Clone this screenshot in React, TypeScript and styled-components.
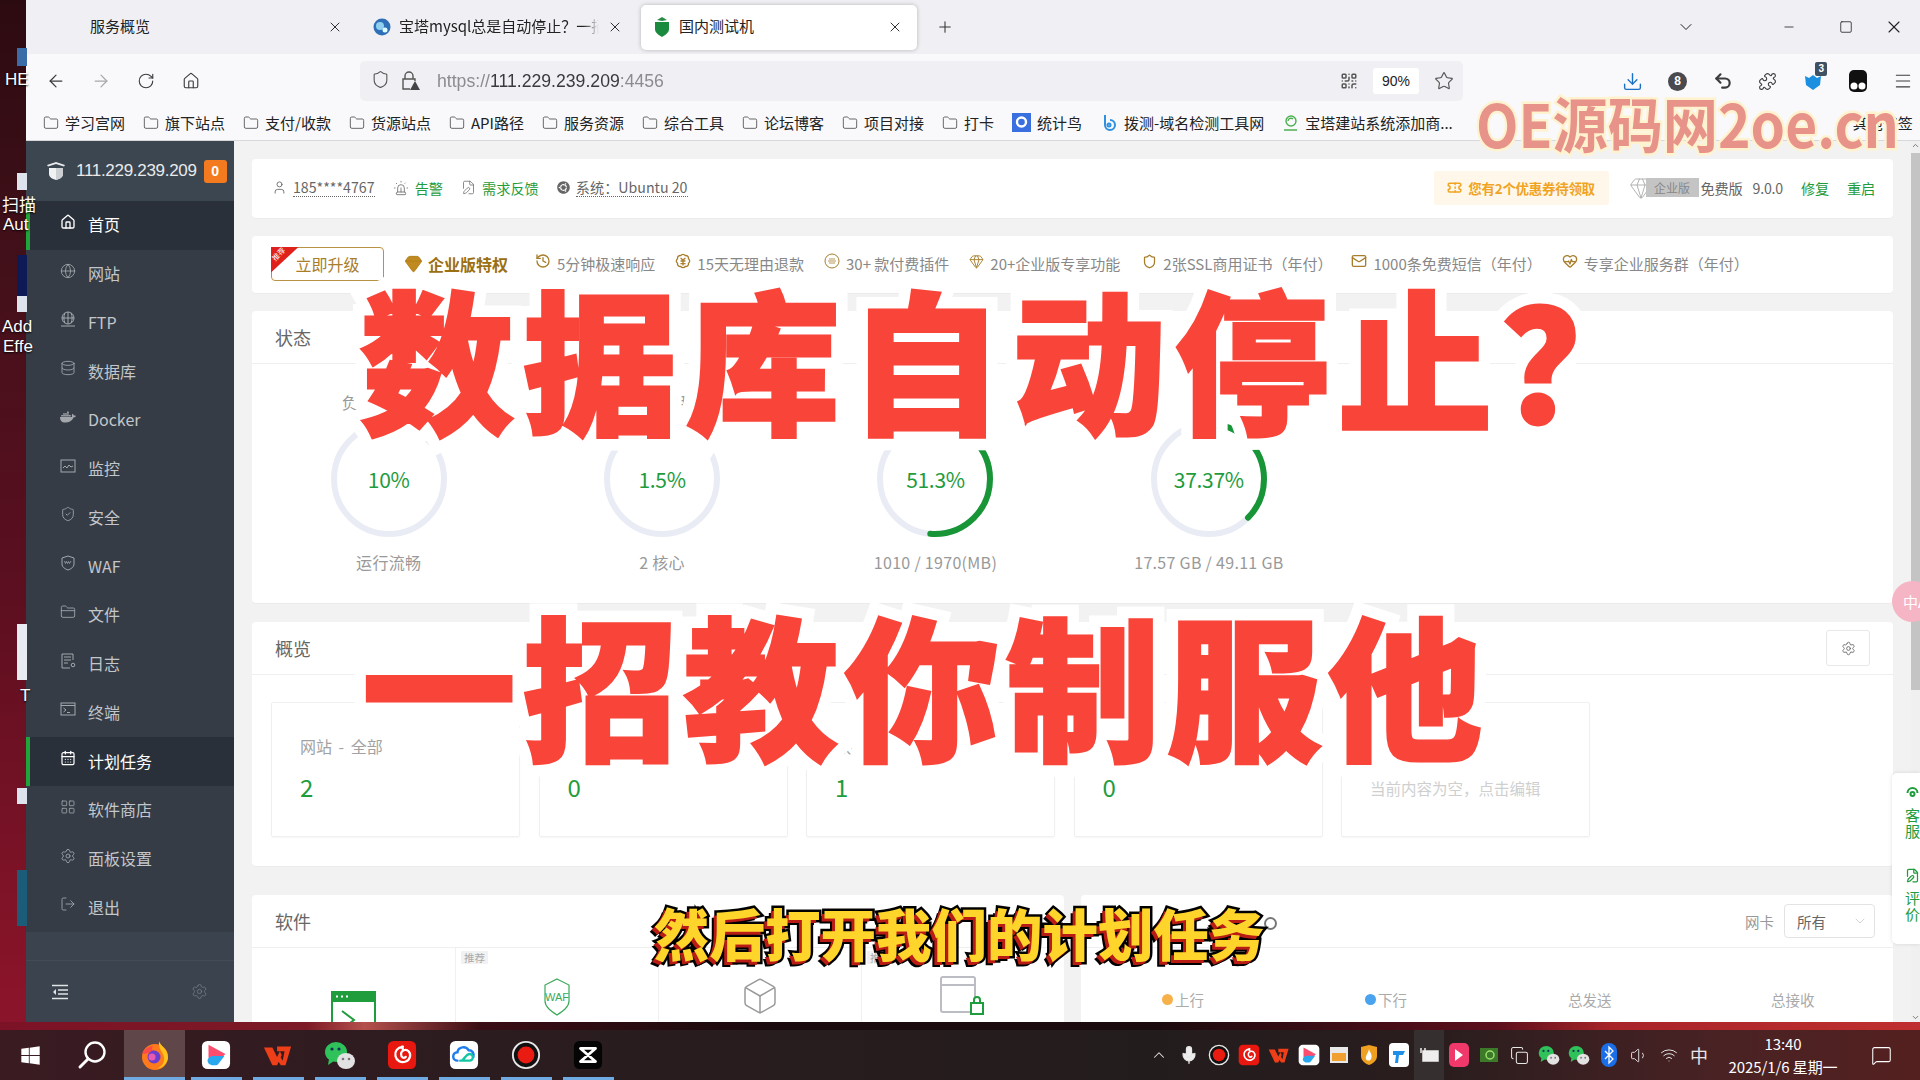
import React from "react";
import styled, { createGlobalStyle } from "styled-components";
import {
  ArrowLeft, ArrowRight, RotateCw, House, Shield, Star, Download, Undo2, Puzzle, Menu, X, Plus,
  ChevronDown, ChevronUp, Minus, Square, QrCode, Folder, User, Siren, FilePen, Globe, Database,
  ShieldCheck, FolderClosed, CalendarDays, LayoutGrid, Settings, LogOut, Gem,
  History, Mail, Mic, Volume1, Wifi, Copy, MessageSquare, Box, BadgeJapaneseYen, HeartPulse, Ticket,
} from "lucide-react";
import { FaDocker, FaUbuntu, FaWindows } from "react-icons/fa";

const CJK = `"Noto Sans CJK SC", "Liberation Sans", sans-serif`;
const GREEN = "#1f9c3c";
const GOLD = "#a87d2c";

const Global = createGlobalStyle`
  html, body { margin: 0; padding: 0; background: #3a0d14; }
  body { font-family: ${CJK}; overflow: hidden; }
  * { box-sizing: border-box; }
`;

const Screen = styled.div`
  position: relative; width: 1920px; height: 1080px; overflow: hidden;
  display: flex; flex-direction: column;
  background: linear-gradient(180deg, #2c0b10 0%, #43101a 25%, #5c0f20 55%, #8a1429 92%);
`;
const Desk = styled.div`display: flex; height: 1022px; padding-left: 26px;`;
const Wallstrip = styled.div`
  height: 8px;
  background: linear-gradient(90deg, #7c1226 0%, #7c1a26 16%, #b5504c 19%, #3a0d14 25%, #1a0b0e 40%, #1a0b0e 60%, #5c0f1c 78%, #a82428 84%, #c02f2f 100%);
`;
const Win = styled.div`
  flex: 1; min-width: 0; display: flex; flex-direction: column; background: #f9f9fb; overflow: hidden;
`;

/* desktop slivers */
const DeskLabel = styled.span<{ $x: number; $y: number }>`
  position: absolute; left: ${p => p.$x}px; top: ${p => p.$y}px; color: #fff; font-size: 17px; line-height: 20px;
  white-space: nowrap; font-family: "Liberation Sans", ${CJK}; text-shadow: 0 1px 2px #000;
`;
const DeskTile = styled.span<{ $y: number; $h: number; $c: string }>`
  position: absolute; left: 17px; top: ${p => p.$y}px; width: 10px; height: ${p => p.$h}px; background: ${p => p.$c};
`;

/* tabs */
const TabStrip = styled.div`
  height: 54px; background: #f0f0f4; display: flex; align-items: center; padding-left: 55px; flex-shrink: 0;
`;
const Tab = styled.div<{ $active?: boolean; $pad: number }>`
  width: 276px; height: 45px; margin-right: 4px; padding: 0 14px 0 ${p => p.$pad}px; display: flex; align-items: center; gap: 8px;
  font-size: 15px; color: #222; border-radius: 5px; flex-shrink: 0;
  background: ${p => (p.$active ? "#fff" : "transparent")};
  box-shadow: ${p => (p.$active ? "0 0 4px rgba(0,0,0,.25)" : "none")};
`;
const TabTitle = styled.span<{ $fade?: boolean }>`
  flex: 1; min-width: 0; white-space: nowrap; overflow: hidden; line-height: 20px; margin-top: -2px;
  ${p => (p.$fade ? "mask-image: linear-gradient(90deg, #000 92%, transparent);" : "")}
`;
const NewTab = styled.span`display: flex; margin-left: 15px; color: #333;`;
const WinControls = styled.div`
  margin-left: auto; display: flex; align-items: center; color: #222; padding-right: 6px;
`;
const WinBtn = styled.span<{ $w: number }>`display: flex; justify-content: center; width: ${p => p.$w}px;`;

/* toolbar */
const Toolbar = styled.div`
  height: 54px; display: flex; align-items: center; padding-left: 7px; flex-shrink: 0; background: #f9f9fb;
`;
const ToolBtn = styled.span<{ $dim?: boolean; $color?: string }>`
  position: relative; width: 45px; flex-shrink: 0; display: flex; justify-content: center; align-items: center;
  color: ${p => p.$color ?? (p.$dim ? "#a8a8ac" : "#3c3c40")};
`;
const UrlBar = styled.div`
  margin: 0 147px 0 147px; width: 1103px; height: 40px; flex-shrink: 0; border-radius: 5px; background: #f0f0f4;
  display: flex; align-items: center; padding-left: 11px; color: #555;
`;
const UrlIcons = styled.span`display: flex; gap: 11px; width: 66px;`;
const UrlText = styled.span`
  font: 18px "Liberation Sans", sans-serif; color: #8c8c90; transform: scaleX(.98); transform-origin: left;
  b { font-weight: 400; color: #3a3a3e; }
`;
const UrlEnd = styled.span`margin-left: auto; display: flex; align-items: center; color: #555; padding-right: 9px;`;
const Zoom = styled.span`
  width: 46px; height: 26px; margin: 0 15px 0 15px; background: #fff; border-radius: 3px; color: #222;
  font: 14px/26px "Liberation Sans", sans-serif; text-align: center;
`;
const Badge = styled.span`
  position: absolute; top: -9px; right: 8px; background: #3f5060; color: #fff; font: 700 10px/14px "Liberation Sans", sans-serif;
  padding: 0 3px; border-radius: 2px;
`;
const Eight = styled.span`
  width: 19px; height: 19px; border-radius: 50%; background: #4a4a4e; color: #fff; text-align: center;
  font: 700 12px/19px "Liberation Sans", sans-serif;
`;

/* bookmarks */
const Bookmarks = styled.div`
  height: 33px; display: flex; align-items: center; padding: 0 0 3px 17px; gap: 18px; flex-shrink: 0; overflow: hidden;
  background: #f9f9fb; border-bottom: 1px solid #d8d8da; white-space: nowrap;
`;
const Bookmark = styled.span`
  display: flex; align-items: center; gap: 6px; font-size: 15px; color: #222; flex-shrink: 0;
`;
const BookmarkEnd = styled(Bookmark)`margin-left: 382px;`;

/* panel */
const Panel = styled.div`flex: 1; min-height: 0; display: flex;`;
const Side = styled.nav`width: 208px; flex-shrink: 0; display: flex; flex-direction: column; background: #3b444e;`;
const SideHead = styled.div`
  height: 60px; display: flex; align-items: center; padding-left: 20px; background: #3c4650; color: #e8eaec;
`;
const HeadIp = styled.span`margin-left: 10px; font: 17px "Liberation Sans", sans-serif; letter-spacing: -.3px;`;
const HeadBadge = styled.span`
  margin-left: 7px; width: 23px; height: 23px; border-radius: 3px; background: #f47a1f; color: #fff; text-align: center;
  font: 700 14px/23px "Liberation Sans", sans-serif;
`;
const SideItem = styled.div<{ $on?: boolean }>`
  height: 48.75px; display: flex; align-items: center; gap: 12px; padding: 0 0 2px 30px;
  border-left: 4px solid ${p => (p.$on ? "#20a53a" : "transparent")};
  background: ${p => (p.$on ? "#2a3039" : "#353c45")};
  color: ${p => (p.$on ? "#fff" : "#c3c6ca")}; font-size: 16px;
  svg { width: 16px; height: 16px; margin-top: -5px; flex-shrink: 0; color: ${p => (p.$on ? "#fff" : "#a4a8ad")}; }
`;
const SideFill = styled.div`height: 29px; border-bottom: 1px solid #434c56;`;
const SideFoot = styled.div`
  flex: 1; display: flex; align-items: center; justify-content: space-between; padding: 0 26px; color: #cfd2d5;
`;
const Main = styled.main`
  position: relative; flex: 1; min-width: 0; background: #f2f2f2; padding: 18px 27px 0 18px; display: flex; flex-direction: column;
  overflow: hidden;
`;
const Scroll = styled.span`
  position: absolute; top: 0; right: 0; bottom: 0; width: 9px; background: #f0f0f0; color: #555;
  display: flex; flex-direction: column; justify-content: space-between; align-items: center;
`;
const Thumb = styled.span`position: absolute; top: 12px; left: 0; right: 0; height: 537px; background: #c4c4c4;`;
const Card = styled.section<{ $h?: number; $mb?: number }>`
  background: #fff; border-radius: 4px; flex-shrink: 0; height: ${p => p.$h}px; margin-bottom: ${p => p.$mb ?? 18}px;
  box-shadow: 0 1px 1px rgba(0,0,0,.03);
`;
const TopBar = styled(Card)`display: flex; align-items: center; padding: 0 18px 2px 20px; font-size: 14.2px;`;
const Meta = styled.span<{ $g?: boolean; $ml?: number }>`
  display: flex; align-items: center; gap: 6px; margin-left: ${p => p.$ml ?? 0}px;
  color: ${p => (p.$g ? GREEN : "#666")};
  svg { color: #666; flex-shrink: 0; }
`;
const Dotted = styled.span`border-bottom: 1px dotted currentColor; line-height: 18px;`;
const Coupon = styled.span`
  margin-left: auto; width: 175px; height: 34px; background: #fff8ea; border-radius: 3px; color: #f0a41f; font-weight: 700;
  font-size: 13.5px; letter-spacing: -.3px; display: flex; align-items: center; justify-content: center; gap: 6px;
`;
const EntTag = styled.span`
  display: flex; align-items: center; margin-left: 20px; color: #aaa;
`;
const EntChip = styled.span`
  background: #c4c4c4; color: #888; font-size: 12px; line-height: 19px; width: 53px; height: 19px; text-align: center; margin-left: -7px;
`;
const Plain = styled.span<{ $ml: number; $g?: boolean }>`
  margin-left: ${p => p.$ml}px; color: ${p => (p.$g ? GREEN : "#666")}; letter-spacing: -.2px;
`;
const FeatureBar = styled(Card)`display: flex; align-items: center; padding: 0 0 2px 19px; white-space: nowrap; overflow: hidden;`;
const Upgrade = styled.span`
  position: relative; width: 113px; height: 34px; border: 1px solid #b99344; border-radius: 4px; color: ${GOLD}; font-size: 16px;
  display: flex; align-items: center; justify-content: center; flex-shrink: 0;
`;
const Ribbon = styled.span`
  position: absolute; left: -1px; top: -1px; width: 28px; height: 26px; background: #e0201a; color: #fff; font-size: 7.5px;
  clip-path: polygon(0 0, 100% 0, 0 100%);
`;
const RibbonText = styled.span`
  position: absolute; left: 0; top: 2px; line-height: 10px; transform: rotate(-45deg);
`;
const Ent = styled.span`
  margin-left: 20px; display: flex; align-items: center; gap: 5px; font-weight: 700; font-size: 16px; color: #9a7012;
  svg { color: #b07f1a; }
`;
const Feature = styled.span<{ $ml: number }>`
  margin-left: ${p => p.$ml}px; display: flex; align-items: center; gap: 6px; color: #888; font-size: 15px;
  svg { color: ${GOLD}; flex-shrink: 0; margin-top: -5px; }
`;
const CardHead = styled.header<{ $h: number }>`
  height: ${p => p.$h}px; display: flex; align-items: center; padding: 0 23px; border-bottom: 1px solid #efefef; color: #666; font-size: 18px;
`;
const GaugeRow = styled.div`display: grid; grid-template-columns: repeat(4, 273.4px); padding-top: 28px;`;
const GaugeCell = styled.div`display: flex; flex-direction: column; align-items: center; color: #999; font-size: 16px;`;
const GaugeTitle = styled.span<{ $pr: number }>`font-size: 16px; line-height: 20px; height: 20px; padding-right: ${p => p.$pr}px;`;
const GaugeWrap = styled.div`position: relative; width: 116px; height: 116px; margin-top: 9px;`;
const GaugeValue = styled.span`
  position: absolute; inset: 0; display: flex; align-items: center; justify-content: center; color: ${GREEN}; font-size: 21px;
  letter-spacing: -.3px;
`;
const GaugeNote = styled.span`margin-top: 15px; line-height: 20px; letter-spacing: .3px;`;
const GearBtn = styled.span`
  margin-left: auto; width: 44px; height: 36px; border: 1px solid #e8e8e8; border-radius: 3px; color: #666;
  display: flex; align-items: center; justify-content: center;
`;
const OverGrid = styled.div`display: grid; grid-template-columns: repeat(5, 249px); gap: 18.5px; padding: 27px 0 0 19px;`;
const OverBox = styled.div`
  height: 135px; border: 1px solid #f0f0f0; padding: 31px 0 0 28px; box-shadow: 0 1px 2px rgba(0,0,0,.04); border-radius: 2px;
`;
const OverLabel = styled.div`font-size: 16px; line-height: 24px; color: #a2a2a2; word-spacing: 3px;`;
const OverValue = styled.div`font-size: 24px; line-height: 32px; margin-top: 13px; color: ${GREEN};`;
const OverEmpty = styled.div`font-size: 15.5px; color: #cfcfcf; margin-top: 43px; white-space: nowrap;`;
const Bottom = styled.div`display: grid; grid-template-columns: 812px 812px; gap: 17px;`;
const BottomCard = styled(Card)`height: 130px; margin: 0; overflow: hidden;`;
const SoftGrid = styled.div`display: grid; grid-template-columns: repeat(4, 1fr); height: 80px;`;
const SoftCell = styled.div<{ $pt: number }>`
  position: relative; display: flex; justify-content: center; padding-top: ${p => p.$pt}px;
  & + & { border-left: 1px solid #f0f0f0; }
`;
const RecTag = styled.span`
  position: absolute; left: 5px; top: 3px; background: #f2f2f2; color: #aaa; font-size: 10.5px; line-height: 13px; padding: 0 3px;
`;
const NicLabel = styled.span`margin-left: auto; color: #999; font-size: 14.5px;`;
const Select = styled.span`
  margin: 0 -5px 0 10px; width: 91px; height: 34px; border: 1px solid #e3e3e3; border-radius: 4px; display: flex; align-items: center;
  justify-content: space-between; padding: 0 6px 0 12px; font-size: 14.5px; color: #666;
  svg { color: #bbb; }
`;
const NetRow = styled.div`
  display: grid; grid-template-columns: repeat(4, 203px); font-size: 14.5px; color: #aaa; padding: 41px 0 0 81px;
  height: 80px;
`;
const NetCell = styled.span<{ $dot?: string }>`
  display: flex; align-items: center; height: 20px; gap: 2px;
  &::before { content: ""; display: ${p => (p.$dot ? "block" : "none")}; width: 11px; height: 11px; border-radius: 50%; background: ${p => p.$dot}; }
`;
const Spin = styled.span`
  position: absolute; left: 1264px; top: 917px; width: 13px; height: 13px; border: 2px solid #777; border-radius: 50%;
`;

/* right float */
const Float = styled.aside`
  position: absolute; right: 0; top: 632px; width: 28px; height: 171px; background: #fff; border-radius: 5px 0 0 5px;
  box-shadow: 0 0 4px rgba(0,0,0,.12); color: ${GREEN}; display: flex; flex-direction: column; padding-left: 13px;
  font-size: 15px; line-height: 16px; overflow: hidden;
`;
const FloatBlock = styled.span<{ $mt: number }>`
  display: flex; flex-direction: column; margin-top: ${p => p.$mt}px; width: 16px;
  svg { margin-bottom: 7px; flex-shrink: 0; }
`;
const Pink = styled.span`
  position: absolute; right: -13px; top: 440px; width: 41px; height: 41px; border-radius: 50%; background: #f6b5c5; color: #fff;
  font-size: 15px; line-height: 41px; padding-left: 11px; white-space: nowrap; overflow: hidden;
`;

/* overlay text */
const Big = styled.div<{ $x: number; $y: number; $ls: number }>`
  position: absolute; left: ${p => p.$x}px; top: ${p => p.$y}px; white-space: nowrap; z-index: 5;
  font-size: 154px; font-weight: 900; line-height: 154px; color: #f94539; font-family: "Noto Sans CJK SC", sans-serif;
  letter-spacing: ${p => p.$ls}px;
  -webkit-text-stroke: 26px #fff; paint-order: stroke fill;
  &::after {
    content: attr(data-t); position: absolute; left: 0; top: 0; -webkit-text-stroke: 3px #f94539;
  }
`;
const Subtitle = styled.div`
  position: absolute; left: 654px; top: 896px; z-index: 6; white-space: nowrap; font-size: 55.5px; font-weight: 900; line-height: 72px;
  color: #ffd42b; font-family: "Noto Sans CJK SC", sans-serif;
  -webkit-text-stroke: 5px #000; paint-order: stroke fill; text-shadow: -3px 3px 0 #b91c14, -5px 5px 0 #000;
`;
const Mark = styled.div`
  position: absolute; left: 1476px; top: 79px; z-index: 6; white-space: nowrap; font-size: 60px; font-weight: 700; line-height: 86px;
  color: #e8938a; font-family: "Noto Sans CJK SC", sans-serif; transform: scaleX(.92); transform-origin: left;
  -webkit-text-stroke: 5px #fff3cf; paint-order: stroke fill;
`;

/* taskbar */
const Taskbar = styled.footer`
  flex: 1; position: relative; display: flex; align-items: center;
  background: linear-gradient(90deg, #3a1b22 0%, #2b1c1f 25%, #231c1d 60%, #2a1d1e 75%, #4a2224 90%, #54201f 100%);
`;
const TaskSlot = styled.span<{ $w: number; $on?: boolean; $line?: boolean }>`
  position: relative; width: ${p => p.$w}px; height: 50px; flex-shrink: 0; display: flex; align-items: center; justify-content: center; color: #fff;
  background: ${p => (p.$on ? "#5f4649" : "transparent")};
  &::after {
    content: ""; display: ${p => (p.$line ? "block" : "none")}; position: absolute; left: ${p => (p.$on ? 0 : 6)}px; right: ${p => (p.$on ? 0 : 5)}px;
    bottom: 0; height: 3px; background: #6fabe2;
  }
`;
const Tray = styled.div`margin-left: auto; display: flex; align-items: center; height: 50px; padding-right: 6px; color: #fff;`;
const TrayItem = styled.span<{ $hi?: boolean }>`
  width: 30px; height: 50px; display: flex; align-items: center; justify-content: center; color: #e8e8e8;
  background: ${p => (p.$hi ? "#35302f" : "transparent")}; font-size: 18px;
`;
const Clock = styled.span`
  width: 130px; margin-left: 4px; display: flex; flex-direction: column; align-items: center; color: #fff;
  font-size: 15px; line-height: 23px; letter-spacing: -.1px;
`;
const Notice = styled.span`width: 66px; display: flex; justify-content: center; margin-left: 0;`;

/* drawn logos */
const Logo = ({ s = 30, children }: { s?: number; children: React.ReactNode }) => (
  <svg width={s} height={s} viewBox="0 0 32 32">{children}</svg>
);
const IcoFirefox = ({ s }: { s?: number }) => (
  <Logo s={s}>
    <circle cx="16" cy="18" r="13" fill="#ff7a1a" />
    <path d="M20 2c1 5 9 7 9 17a13 13 0 0 1-13 11c6-1 10-6 9-12-1-5-6-8-5-16z" fill="#ffc21c" />
    <path d="M3 15c3-6 8-8 11-8-2 3-1 4 2 5-5 1-8 3-13 3z" fill="#ff4a4a" />
    <circle cx="15" cy="18" r="6.5" fill="#6a3fd0" />
    <circle cx="13" cy="18" r="3.5" fill="#e85ab0" />
  </Logo>
);
const IcoPlayer = ({ s }: { s?: number }) => (
  <Logo s={s}>
    <rect x="1" y="1" width="30" height="30" rx="6" fill="#fff" />
    <path d="M8 5l18 10-4 4H8z" fill="#ff4d6d" />
    <path d="M7 22c0-3 3-5 6-5h12l-7 9c-3 2-11 1-11-4z" fill="#2aa8ee" />
  </Logo>
);
const IcoWps = ({ s }: { s?: number }) => (
  <Logo s={s}>
    <path d="M1 8h9l5 10 3-6 2 4-5 11h-5zM15 7h15l-6 20h-5l-3-5 2-5 3 5 2-10h-8z" fill="#ee3f18" />
  </Logo>
);
const IcoWechat = ({ s }: { s?: number }) => (
  <Logo s={s}>
    <ellipse cx="12" cy="13" rx="11" ry="10" fill="#2fc25b" />
    <path d="M5 20l-1 6 6-4z" fill="#2fc25b" />
    <circle cx="8" cy="10" r="1.6" fill="#135" /><circle cx="15" cy="10" r="1.6" fill="#135" />
    <ellipse cx="22" cy="22" rx="9" ry="8" fill="#e2e2e2" />
    <circle cx="19" cy="20" r="1.3" fill="#777" /><circle cx="25" cy="20" r="1.3" fill="#777" />
  </Logo>
);
const IcoNetease = ({ s }: { s?: number }) => (
  <Logo s={s}>
    <rect x="1" y="1" width="30" height="30" rx="6" fill="#e8170f" />
    <path d="M17 7c-6 1-9 5-8 10s6 8 11 6 6-8 3-11-8-1-8 3 3 5 5 3M16 7l1 3" fill="none" stroke="#fff" strokeWidth="2.4" strokeLinecap="round" />
  </Logo>
);
const IcoCloud = ({ s }: { s?: number }) => (
  <Logo s={s}>
    <rect x="1" y="1" width="30" height="30" rx="6" fill="#fff" />
    <path d="M9 22a4.5 4.5 0 0 1 0-9c1-6 9-7 12-2 4 0 6 3 5 7" fill="none" stroke="#1f7cf0" strokeWidth="2.6" strokeLinecap="round" />
    <path d="M12 22h10a3.5 3.5 0 0 0 0-7c-3 0-5 4-7 6" fill="none" stroke="#14c5a5" strokeWidth="2.6" strokeLinecap="round" />
  </Logo>
);
const IcoRecord = ({ s }: { s?: number }) => (
  <Logo s={s}>
    <circle cx="16" cy="16" r="14" fill="#111" stroke="#e8e8e8" strokeWidth="2" />
    <circle cx="16" cy="16" r="9" fill="#ea1c12" />
  </Logo>
);
const IcoCapcut = ({ s }: { s?: number }) => (
  <Logo s={s}>
    <rect x="1" y="1" width="30" height="30" rx="6" fill="#050505" />
    <path d="M8 9h16L8 23h16zM8 9l16 14" stroke="#fff" strokeWidth="3" fill="none" strokeLinejoin="round" />
  </Logo>
);
const IcoSearch = () => (
  <svg width="30" height="30" viewBox="0 0 30 30" fill="none" stroke="#fff" strokeWidth="2.4" strokeLinecap="round">
    <circle cx="18" cy="12" r="9.5" /><path d="M11 19l-8 8" strokeWidth="3" />
  </svg>
);
const IcoLockWarn = () => (
  <svg width="20" height="22" viewBox="0 0 20 22" fill="none" stroke="#555" strokeWidth="1.4">
    <path d="M4 9V6a4 4 0 0 1 8 0v3" /><path d="M9 19H2V9h12v2" />
    <path d="M14 11l5 9H9z" fill="#444" stroke="none" />
  </svg>
);
const IcoBaota = ({ s = 20 }: { s?: number }) => (
  <svg width={s} height={s} viewBox="0 0 20 20">
    <path d="M1 4l9-3 9 3-1 1.4-8-2.4-8 2.4z" fill="#e8eaec" />
    <path d="M3 7h14v6c0 3-3 5-7 6-4-1-7-3-7-6z" fill="#f0f1f2" />
    <path d="M10 7h7v6c0 3-3 5-7 6z" fill="#cdd0d3" />
  </svg>
);
const IcoGreenShield = () => (
  <svg width="18" height="20" viewBox="0 0 18 20">
    <path d="M9 0l5 3-5 1-5-1z" fill="#2a8a4a" />
    <path d="M2 5h14v7c0 4-4 6-7 8-3-2-7-4-7-8z" fill="#1a8a3f" />
  </svg>
);
const IcoBlueBird = () => (
  <svg width="18" height="18" viewBox="0 0 18 18">
    <circle cx="9" cy="9" r="8.5" fill="#2f6fb8" />
    <circle cx="7" cy="8" r="4" fill="#8fd0f0" />
    <circle cx="12" cy="12" r="2.5" fill="#dff" />
  </svg>
);
const IcoWebFrame = ({ c = "#a4a8ad" }: { c?: string }) => (
  <svg viewBox="0 0 16 16" fill="none" stroke={c} strokeWidth="1">
    <rect x="1" y="2" width="14" height="12" />
    <path d="M3 10l2-2 2 2 2-3 2 2 2-1" />
  </svg>
);
const IcoLogs = () => (
  <svg viewBox="0 0 16 16" fill="none" stroke="#a4a8ad" strokeWidth="1">
    <path d="M13 7V1H2v14h8M4 4h7M4 7h7M4 10h4" /><circle cx="13" cy="12" r="1.8" />
  </svg>
);
const IcoFtp = () => (
  <svg viewBox="0 0 16 16" fill="none" stroke="#a4a8ad" strokeWidth="1">
    <circle cx="8" cy="7" r="6" /><path d="M2 7h12M8 1v12M5 2c-1.5 3-1.5 7 0 10M11 2c1.5 3 1.5 7 0 10M1 15h14" />
  </svg>
);
const IcoWaf = () => (
  <svg viewBox="0 0 16 16" fill="none" stroke="#a4a8ad" strokeWidth="1">
    <path d="M8 1l6 2v6c0 3-3 5-6 6-3-1-6-3-6-6V3z" /><path d="M4.5 6l1 2.5 1-2 1 2 1-2 1 2 1.5-2.5" strokeWidth=".8" />
  </svg>
);
const IcoTerm = () => (
  <svg viewBox="0 0 16 16" fill="none" stroke="#a4a8ad" strokeWidth="1">
    <rect x="1" y="2" width="14" height="12" /><path d="M1 4.5h14M3.5 7l2.5 2-2.5 2M7 11.5h3" />
  </svg>
);
const IcoOutdent = () => (
  <svg width="16" height="16" viewBox="0 0 16 16" fill="none" stroke="#e0e2e4" strokeWidth="1.4">
    <path d="M0 1.5h16M6 6h10M6 10h10M0 14.5h16" /><path d="M4 5L1 8l3 3z" fill="#e0e2e4" stroke="none" />
  </svg>
);
const IcoFolder = () => <Folder size={16} strokeWidth={1.2} color="#444" />;

const Gauge = ({ pct }: { pct: number }) => {
  const r = 55;
  const c = 2 * Math.PI * r;
  return (
    <svg width="116" height="116" viewBox="0 0 116 116">
      <circle cx="58" cy="58" r={r} fill="none" stroke="#e9ecf4" strokeWidth="6" />
      <circle cx="58" cy="58" r={r} fill="none" stroke="#179537" strokeWidth="6" strokeLinecap="round"
        strokeDasharray={`${(c * pct) / 100} ${c}`} transform="rotate(-90 58 58)" />
    </svg>
  );
};

const sideItems: [React.ReactNode, string, boolean?][] = [
  [<House />, "首页", true],
  [<Globe strokeWidth={1.3} />, "网站"],
  [<IcoFtp />, "FTP"],
  [<Database strokeWidth={1.3} />, "数据库"],
  [<FaDocker />, "Docker"],
  [<IcoWebFrame />, "监控"],
  [<ShieldCheck strokeWidth={1.3} />, "安全"],
  [<IcoWaf />, "WAF"],
  [<FolderClosed strokeWidth={1.3} />, "文件"],
  [<IcoLogs />, "日志"],
  [<IcoTerm />, "终端"],
  [<CalendarDays strokeWidth={1.8} />, "计划任务", true],
  [<LayoutGrid strokeWidth={1.2} />, "软件商店"],
  [<Settings strokeWidth={1.3} />, "面板设置"],
  [<LogOut strokeWidth={1.3} />, "退出"],
];
const bookmarks: [React.ReactNode, string][] = [
  [<IcoFolder />, "学习宫网"], [<IcoFolder />, "旗下站点"], [<IcoFolder />, "支付/收款"], [<IcoFolder />, "货源站点"],
  [<IcoFolder />, "API路径"], [<IcoFolder />, "服务资源"], [<IcoFolder />, "综合工具"], [<IcoFolder />, "论坛博客"],
  [<IcoFolder />, "项目对接"], [<IcoFolder />, "打卡"],
  [<svg width="19" height="19" viewBox="0 0 19 19"><rect width="19" height="19" fill="#3a6fe0" /><circle cx="9.5" cy="9" r="4.5" fill="none" stroke="#fff" strokeWidth="2.4" /></svg>, "统计鸟"],
  [<svg width="18" height="20" viewBox="0 0 18 20" fill="none" stroke="#2f8fe0" strokeWidth="2"><path d="M5 2v10a5 5 0 1 0 5-5" /><circle cx="9" cy="12" r="1.5" /></svg>, "拨测-域名检测工具网"],
  [<svg width="17" height="18" viewBox="0 0 17 18" fill="none" stroke="#4caf50" strokeWidth="1.4"><circle cx="9" cy="7" r="5" /><path d="M2 16h13M6 7a3 3 0 0 1 5-2" /></svg>, "宝塔建站系统添加商..."],
];
const features: [React.ReactNode, string, number][] = [
  [<History size={16} />, "5分钟极速响应", 27],
  [<BadgeJapaneseYen size={16} />, "15天无理由退款", 20],
  [<svg width="16" height="16" viewBox="0 0 16 16" fill="none" stroke={GOLD}><circle cx="8" cy="8" r="7" /><path d="M4 8h8M5 6h6M5 10h6" strokeWidth=".8" /></svg>, "30+ 款付费插件", 20],
  [<Gem size={15} strokeWidth={1.5} />, "20+企业版专享功能", 20],
  [<Shield size={15} />, "2张SSL商用证书（年付）", 22],
  [<Mail size={16} />, "1000条免费短信（年付）", 19],
  [<HeartPulse size={16} />, "专享企业服务群（年付）", 20],
];
const overview: [string, string][] = [["网站 - 全部", "2"], ["FTP - 全部", "0"], ["数据库 - 全部", "1"], ["安全风险", "0"]];
const gauges: [string, number, string, number][] = [
  ["负载状态", 10, "运行流畅", 30],
  ["CPU使用率", 1.5, "2 核心", 0],
  ["内存使用率", 51.3, "1010 / 1970(MB)", 0],
  ["/", 37.37, "17.57 GB / 49.11 GB", 0],
];
const taskApps: [React.ReactNode, boolean?][] = [
  [<IcoFirefox s={32} />, true], [<IcoPlayer s={30} />], [<IcoWps s={30} />], [<IcoWechat s={32} />],
  [<IcoNetease s={30} />], [<IcoCloud s={30} />], [<IcoRecord s={30} />], [<IcoCapcut s={30} />],
];

export default function App() {
  return (
    <Screen>
      <Global />
      <DeskTile $y={48} $h={18} $c="#3a6da8" />
      <DeskLabel $x={5} $y={70}>HE</DeskLabel>
      <DeskTile $y={173} $h={17} $c="#dde4ee" />
      <DeskLabel $x={2} $y={196}>扫描</DeskLabel>
      <DeskLabel $x={3} $y={215}>Aut</DeskLabel>
      <DeskTile $y={255} $h={41} $c="#0d1a55" />
      <DeskTile $y={296} $h={16} $c="#dde4ee" />
      <DeskLabel $x={2} $y={317}>Add</DeskLabel>
      <DeskLabel $x={3} $y={337}>Effe</DeskLabel>
      <DeskTile $y={624} $h={56} $c="#e8ecf2" />
      <DeskLabel $x={20} $y={686}>T</DeskLabel>
      <DeskTile $y={788} $h={16} $c="#dde4ee" />
      <DeskTile $y={870} $h={56} $c="#1b5d78" />
      <Desk>
        <Win>
          <TabStrip>
            <Tab $pad={9}>
              <TabTitle>服务概览</TabTitle>
              <X size={16} strokeWidth={1.4} />
            </Tab>
            <Tab $pad={12}>
              <IcoBlueBird />
              <TabTitle $fade>宝塔mysql总是自动停止？一招教你制服他</TabTitle>
              <X size={16} strokeWidth={1.4} />
            </Tab>
            <Tab $pad={12} $active>
              <IcoGreenShield />
              <TabTitle>国内测试机</TabTitle>
              <X size={16} strokeWidth={1.4} />
            </Tab>
            <NewTab><Plus size={18} strokeWidth={1.4} /></NewTab>
            <WinControls>
              <WinBtn $w={50}><ChevronDown size={20} strokeWidth={1.2} /></WinBtn>
              <WinBtn $w={49} />
              <WinBtn $w={57}><Minus size={14} strokeWidth={1.4} /></WinBtn>
              <WinBtn $w={57}><Square size={14} strokeWidth={1.4} /></WinBtn>
              <WinBtn $w={40}><X size={20} strokeWidth={1.3} /></WinBtn>
            </WinControls>
          </TabStrip>
          <Toolbar>
            <ToolBtn><ArrowLeft size={20} strokeWidth={1.5} /></ToolBtn>
            <ToolBtn $dim><ArrowRight size={20} strokeWidth={1.5} /></ToolBtn>
            <ToolBtn><RotateCw size={18} strokeWidth={1.5} /></ToolBtn>
            <ToolBtn><House size={18} strokeWidth={1.5} /></ToolBtn>
            <UrlBar>
              <UrlIcons><Shield size={19} strokeWidth={1.4} /><IcoLockWarn /></UrlIcons>
              <UrlText>https://<b>111.229.239.209</b>:4456</UrlText>
              <UrlEnd>
                <QrCode size={18} strokeWidth={2} />
                <Zoom>90%</Zoom>
                <Star size={20} strokeWidth={1.4} />
              </UrlEnd>
            </UrlBar>
            <ToolBtn $color="#1b6fc4"><Download size={21} strokeWidth={1.6} /></ToolBtn>
            <ToolBtn><Eight>8</Eight></ToolBtn>
            <ToolBtn><Undo2 size={20} strokeWidth={2.6} /></ToolBtn>
            <ToolBtn><Puzzle size={19} strokeWidth={1.4} /></ToolBtn>
            <ToolBtn $color="#1b8fe0">
              <svg width="20" height="20" viewBox="0 0 20 20" fill="#1b8fe0"><path d="M2 5l4 2 4-3 4 3 4-2-1 9-7 5-7-5z" /></svg>
              <Badge>3</Badge>
            </ToolBtn>
            <ToolBtn>
              <svg width="20" height="24" viewBox="0 0 20 24"><rect x="1" y="1" width="18" height="22" rx="5" fill="#101010" /><circle cx="6" cy="17" r="3.5" fill="#fff" /><circle cx="14" cy="17" r="3.5" fill="#fff" /></svg>
            </ToolBtn>
            <ToolBtn><Menu size={20} strokeWidth={1.3} /></ToolBtn>
          </Toolbar>
          <Bookmarks>
            {bookmarks.map(([icon, text]) => <Bookmark key={text}>{icon}{text}</Bookmark>)}
            <BookmarkEnd>其他书签</BookmarkEnd>
          </Bookmarks>
          <Panel>
            <Side>
              <SideHead>
                <IcoBaota />
                <HeadIp>111.229.239.209</HeadIp>
                <HeadBadge>0</HeadBadge>
              </SideHead>
              {sideItems.map(([icon, text, on]) => (
                <SideItem key={text} $on={on}>{icon}{text}</SideItem>
              ))}
              <SideFill />
              <SideFoot><IcoOutdent /><Settings size={17} strokeWidth={1} color="#7d858d" /></SideFoot>
            </Side>
            <Main>
              <Scroll>
                <ChevronUp size={9} strokeWidth={2} />
                <Thumb />
                <ChevronDown size={9} strokeWidth={2} />
              </Scroll>
              <TopBar $h={59}>
                <Meta><User size={15} strokeWidth={1.4} /><Dotted>185****4767</Dotted></Meta>
                <Meta $g $ml={18}><Siren size={16} strokeWidth={1.2} />告警</Meta>
                <Meta $g $ml={18}><FilePen size={15} strokeWidth={1.2} />需求反馈</Meta>
                <Meta $ml={18}><FaUbuntu size={13} /><Dotted>系统：Ubuntu 20</Dotted></Meta>
                <Coupon><Ticket size={15} strokeWidth={2.4} />您有2个优惠券待领取</Coupon>
                <EntTag><Gem size={24} strokeWidth={.9} /><EntChip>企业版</EntChip></EntTag>
                <Plain $ml={2}>免费版</Plain>
                <Plain $ml={10}>9.0.0</Plain>
                <Plain $ml={18} $g>修复</Plain>
                <Plain $ml={18} $g>重启</Plain>
              </TopBar>
              <FeatureBar $h={57}>
                <Upgrade><Ribbon><RibbonText>推荐</RibbonText></Ribbon>立即升级</Upgrade>
                <Ent><Gem size={19} fill="#c08a20" strokeWidth={1.2} />企业版特权</Ent>
                {features.map(([icon, text, ml]) => <Feature key={text} $ml={ml}>{icon}{text}</Feature>)}
              </FeatureBar>
              <Card $h={292} $mb={19}>
                <CardHead $h={53}>状态</CardHead>
                <GaugeRow>
                  {gauges.map(([title, pct, note, pr]) => (
                    <GaugeCell key={title}>
                      <GaugeTitle $pr={pr}>{title}</GaugeTitle>
                      <GaugeWrap>
                        <Gauge pct={pct} />
                        <GaugeValue>{pct}%</GaugeValue>
                      </GaugeWrap>
                      <GaugeNote>{note}</GaugeNote>
                    </GaugeCell>
                  ))}
                </GaugeRow>
              </Card>
              <Card $h={244} $mb={29}>
                <CardHead $h={53}>
                  概览
                  <GearBtn><Settings size={15} strokeWidth={1.4} /></GearBtn>
                </CardHead>
                <OverGrid>
                  {overview.map(([label, v]) => (
                    <OverBox key={label}>
                      <OverLabel>{label}</OverLabel>
                      <OverValue>{v}</OverValue>
                    </OverBox>
                  ))}
                  <OverBox><OverEmpty>当前内容为空，点击编辑</OverEmpty></OverBox>
                </OverGrid>
              </Card>
              <Bottom>
                <BottomCard>
                  <CardHead $h={53}>软件</CardHead>
                  <SoftGrid>
                    <SoftCell $pt={43}>
                      <svg width="45" height="50" viewBox="0 0 45 50" fill="none" stroke="#1f9c3c" strokeWidth="2">
                        <rect x="1" y="1" width="43" height="48" />
                        <rect x="1" y="1" width="43" height="9" fill="#1f9c3c" />
                        <path d="M5 5.5h2M10 5.5h2M15 5.5h2" stroke="#fff" />
                        <path d="M11 20l12 9-12 9M25 39h10" />
                      </svg>
                    </SoftCell>
                    <SoftCell $pt={30}>
                      <RecTag>推荐</RecTag>
                      <svg width="32" height="38" viewBox="0 0 32 38" fill="none" stroke="#3aa85a" strokeWidth="1.2">
                        <path d="M16 1l12 6v16c0 6-6 10-12 14C10 33 4 29 4 23V7z" />
                        <text x="16" y="23" fontSize="11" fontFamily="Liberation Sans" textAnchor="middle" fill="#3aa85a" stroke="none">WAF</text>
                      </svg>
                    </SoftCell>
                    <SoftCell $pt={28}>
                      <Box size={40} strokeWidth={.9} color="#999" />
                    </SoftCell>
                    <SoftCell $pt={28}>
                      <RecTag>推荐</RecTag>
                      <svg width="46" height="40" viewBox="0 0 46 40" fill="none" stroke="#bbbcc4" strokeWidth="2">
                        <path d="M30 36H3a2 2 0 0 1-2-2V3a2 2 0 0 1 2-2h30a2 2 0 0 1 2 2v18M1 9h34" />
                        <rect x="31" y="27" width="12" height="11" stroke="#1f9c3c" />
                        <path d="M34 27v-3a3 3 0 0 1 6 0v3" stroke="#1f9c3c" />
                      </svg>
                    </SoftCell>
                  </SoftGrid>
                </BottomCard>
                <BottomCard>
                  <CardHead $h={53}>
                    <NicLabel>网卡</NicLabel>
                    <Select>所有<ChevronDown size={16} strokeWidth={1} /></Select>
                  </CardHead>
                  <NetRow>
                    <NetCell $dot="#f7b14a">上行</NetCell>
                    <NetCell $dot="#4aa3ef">下行</NetCell>
                    <NetCell>总发送</NetCell>
                    <NetCell>总接收</NetCell>
                  </NetRow>
                </BottomCard>
              </Bottom>
              <Pink>中A</Pink>
              <Float>
                <FloatBlock $mt={11}>
                  <svg width="15" height="16" viewBox="0 0 14 16" fill="none" stroke={GREEN} strokeWidth="2"><path d="M2 9a5 5 0 0 1 10 0" /><circle cx="7" cy="10" r="2" /></svg>
                  客服
                </FloatBlock>
                <FloatBlock $mt={29}>
                  <FilePen size={15} />
                  评价
                </FloatBlock>
              </Float>
            </Main>
          </Panel>
        </Win>
      </Desk>
      <Wallstrip />
      <Taskbar>
        <TaskSlot $w={60}><FaWindows size={21} /></TaskSlot>
        <TaskSlot $w={64}><IcoSearch /></TaskSlot>
        {taskApps.map(([icon, on], i) => (
          <TaskSlot key={i} $w={i === 0 ? 61 : 62} $on={on} $line>{icon}</TaskSlot>
        ))}
        <Tray>
          <TrayItem><ChevronUp size={18} strokeWidth={1.4} /></TrayItem>
          <TrayItem><Mic size={20} strokeWidth={1.6} fill="#eee" /></TrayItem>
          <TrayItem><IcoRecord s={22} /></TrayItem>
          <TrayItem><IcoNetease s={22} /></TrayItem>
          <TrayItem><IcoWps s={22} /></TrayItem>
          <TrayItem><IcoPlayer s={22} /></TrayItem>
          <TrayItem>
            <svg width="20" height="20" viewBox="0 0 20 20"><rect x="1" y="2" width="18" height="16" fill="#e8e8e8" /><rect x="3" y="8" width="14" height="8" fill="#f0a030" /></svg>
          </TrayItem>
          <TrayItem>
            <svg width="18" height="22" viewBox="0 0 18 22"><path d="M1 3l8-2 8 2v9c0 5-5 8-8 9-3-1-8-4-8-9z" fill="#f0a020" /><path d="M9 5c1 4 4 6 2 10-1 2-4 2-5 0-1-3 2-5 3-10z" fill="#fff" /></svg>
          </TrayItem>
          <TrayItem>
            <svg width="20" height="24" viewBox="0 0 20 24"><rect width="20" height="24" rx="4" fill="#fff" /><path d="M4 8h12l-2 4H10l-1 8H6l1-8H4z" fill="#1e90e8" /></svg>
          </TrayItem>
          <TrayItem $hi>
            <svg width="20" height="16" viewBox="0 0 20 16" fill="none" stroke="#eee" strokeWidth="1.5"><rect x="4" y="4" width="15" height="10" fill="#eee" /><path d="M2 1v5M6 1v3" /></svg>
          </TrayItem>
          <TrayItem>
            <svg width="20" height="24" viewBox="0 0 20 24"><rect width="20" height="24" rx="5" fill="#f0386b" /><path d="M6 6l8 6-8 6z" fill="#fff" /></svg>
          </TrayItem>
          <TrayItem>
            <svg width="18" height="14" viewBox="0 0 18 14"><rect width="18" height="14" fill="#3c7a2a" /><circle cx="10" cy="7" r="4" fill="none" stroke="#9adf6a" strokeWidth="1.5" /></svg>
          </TrayItem>
          <TrayItem><Copy size={19} strokeWidth={1.3} /></TrayItem>
          <TrayItem><IcoWechat s={22} /></TrayItem>
          <TrayItem><IcoWechat s={22} /></TrayItem>
          <TrayItem>
            <svg width="16" height="24" viewBox="0 0 16 24" fill="none"><rect width="16" height="24" rx="8" fill="#1a6fe8" /><path d="M4 8l8 8-4 4V4l4 4-8 8" stroke="#fff" strokeWidth="1.3" /></svg>
          </TrayItem>
          <TrayItem><Volume1 size={19} strokeWidth={1.2} /></TrayItem>
          <TrayItem><Wifi size={18} strokeWidth={1.3} /></TrayItem>
          <TrayItem>中</TrayItem>
          <Clock><span>13:40</span><span>2025/1/6 星期一</span></Clock>
          <Notice><MessageSquare size={21} strokeWidth={1.2} /></Notice>
        </Tray>
      </Taskbar>
      <Big $x={360} $y={279} $ls={9} data-t="数据库自动停止？">数据库自动停止？</Big>
      <Big $x={362} $y={605} $ls={7} data-t="一招教你制服他">一招教你制服他</Big>
      <Subtitle>然后打开我们的计划任务</Subtitle>
      <Spin />
      <Mark>OE源码网2oe.cn</Mark>
    </Screen>
  );
}
